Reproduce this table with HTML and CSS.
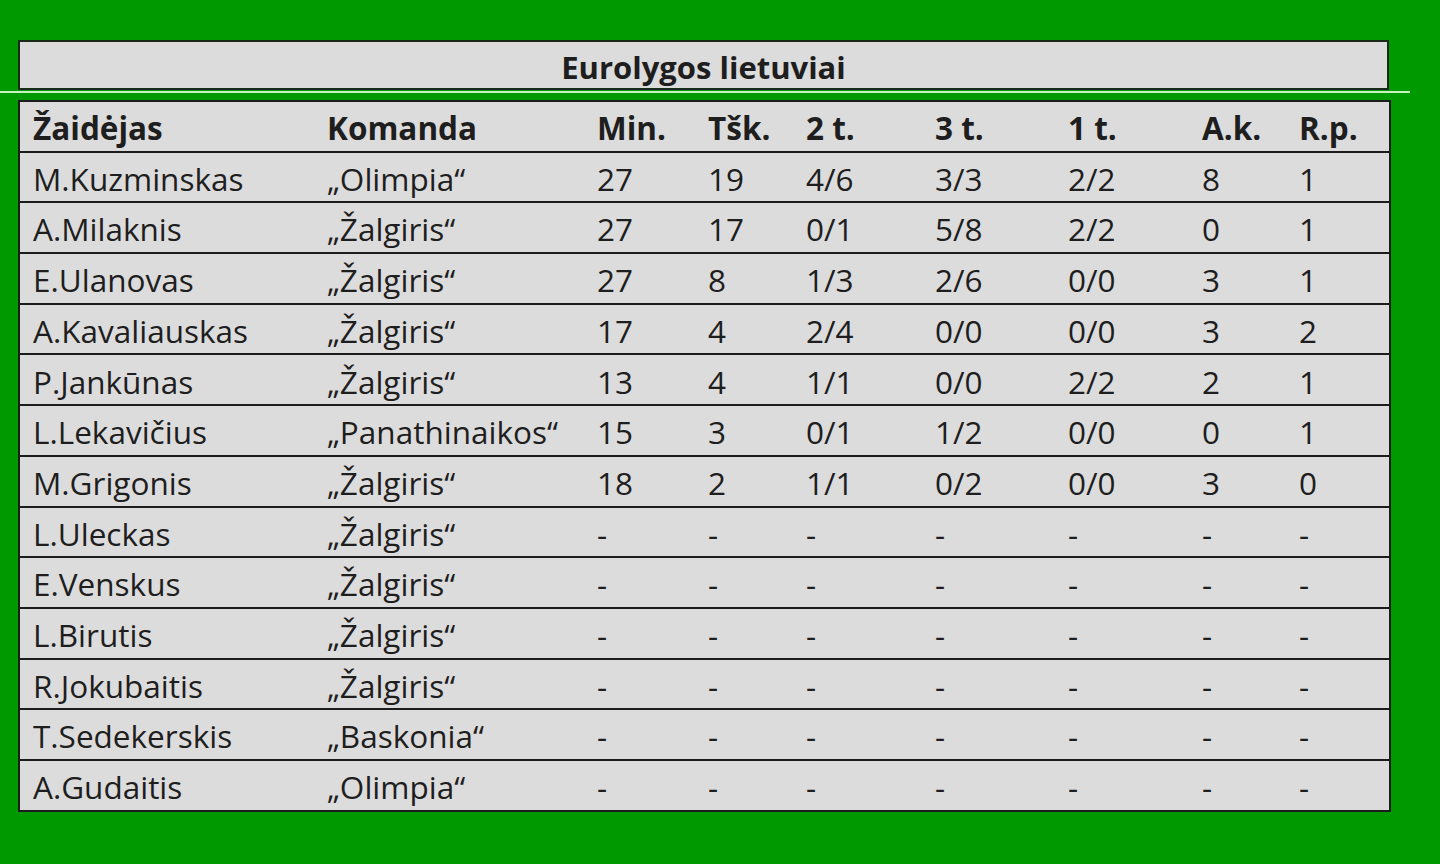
FILE: index.html
```html
<!DOCTYPE html>
<html lang="lt">
<head>
<meta charset="utf-8">
<title>Eurolygos lietuviai</title>
<link rel="stylesheet" href="styles.css">
</head>
<body>
<div class="page">
  <div class="title-box">Eurolygos lietuviai</div>
  <div class="rule"></div>
  <table class="stats">
    <colgroup>
      <col class="c-name"><col class="c-team"><col class="c-min"><col class="c-pts"><col class="c-2t"><col class="c-3t"><col class="c-1t"><col class="c-ak"><col class="c-rp">
    </colgroup>
    <thead>
      <tr><th>Žaidėjas</th><th>Komanda</th><th>Min.</th><th>Tšk.</th><th>2 t.</th><th>3 t.</th><th>1 t.</th><th>A.k.</th><th>R.p.</th></tr>
    </thead>
    <tbody>
      <tr><td>M.Kuzminskas</td><td>„Olimpia“</td><td>27</td><td>19</td><td>4/6</td><td>3/3</td><td>2/2</td><td>8</td><td>1</td></tr>
      <tr><td>A.Milaknis</td><td>„Žalgiris“</td><td>27</td><td>17</td><td>0/1</td><td>5/8</td><td>2/2</td><td>0</td><td>1</td></tr>
      <tr><td>E.Ulanovas</td><td>„Žalgiris“</td><td>27</td><td>8</td><td>1/3</td><td>2/6</td><td>0/0</td><td>3</td><td>1</td></tr>
      <tr><td>A.Kavaliauskas</td><td>„Žalgiris“</td><td>17</td><td>4</td><td>2/4</td><td>0/0</td><td>0/0</td><td>3</td><td>2</td></tr>
      <tr><td>P.Jankūnas</td><td>„Žalgiris“</td><td>13</td><td>4</td><td>1/1</td><td>0/0</td><td>2/2</td><td>2</td><td>1</td></tr>
      <tr><td>L.Lekavičius</td><td>„Panathinaikos“</td><td>15</td><td>3</td><td>0/1</td><td>1/2</td><td>0/0</td><td>0</td><td>1</td></tr>
      <tr><td>M.Grigonis</td><td>„Žalgiris“</td><td>18</td><td>2</td><td>1/1</td><td>0/2</td><td>0/0</td><td>3</td><td>0</td></tr>
      <tr><td>L.Uleckas</td><td>„Žalgiris“</td><td>-</td><td>-</td><td>-</td><td>-</td><td>-</td><td>-</td><td>-</td></tr>
      <tr><td>E.Venskus</td><td>„Žalgiris“</td><td>-</td><td>-</td><td>-</td><td>-</td><td>-</td><td>-</td><td>-</td></tr>
      <tr><td>L.Birutis</td><td>„Žalgiris“</td><td>-</td><td>-</td><td>-</td><td>-</td><td>-</td><td>-</td><td>-</td></tr>
      <tr><td>R.Jokubaitis</td><td>„Žalgiris“</td><td>-</td><td>-</td><td>-</td><td>-</td><td>-</td><td>-</td><td>-</td></tr>
      <tr><td>T.Sedekerskis</td><td>„Baskonia“</td><td>-</td><td>-</td><td>-</td><td>-</td><td>-</td><td>-</td><td>-</td></tr>
      <tr><td>A.Gudaitis</td><td>„Olimpia“</td><td>-</td><td>-</td><td>-</td><td>-</td><td>-</td><td>-</td><td>-</td></tr>
    </tbody>
  </table>
</div>
</body>
</html>
```
FILE: styles.css
```css
html, body {
  margin: 0;
  padding: 0;
  background: #009a00;
}
body {
  width: 1440px;
  height: 864px;
  overflow: hidden;
  font-family: "Open Sans", "Liberation Sans", sans-serif;
  color: #1e1e1e;
}
.page {
  padding-top: 40px;
  display: flex;
  flex-direction: column;
  align-items: flex-start;
}
.title-box {
  margin-left: 18px;
  width: 1367px;
  height: 44px;
  padding-top: 2px;
  border: 2px solid #1a2a1a;
  background: #dcdcdc;
  font-weight: bold;
  font-size: 31px;
  line-height: 46px;
  text-align: center;
}
.rule {
  width: 1410px;
  height: 2px;
  margin-top: 1px;
  background: #c9f2c2;
}
.stats {
  margin-top: 7px;
  margin-left: 18px;
  width: 1371px;
  border-collapse: collapse;
  border: 2px solid #1c1c1c;
  background: #dcdcdc;
  font-size: 31.5px;
  table-layout: fixed;
}
.c-name { width: 295px; }
.c-team { width: 270px; }
.c-min  { width: 111px; }
.c-pts  { width: 98px; }
.c-2t   { width: 129px; }
.c-3t   { width: 133px; }
.c-1t   { width: 134px; }
.c-ak   { width: 97px; }
.c-rp   { width: 104px; }
.stats th, .stats td {
  text-align: left;
  padding: 3px 0 0 13px;
  height: 45.7px;
  border-bottom: 2px solid #1c1c1c;
  white-space: nowrap;
  overflow: visible;
  line-height: 1;
}
.stats th {
  font-weight: bold;
}
```
